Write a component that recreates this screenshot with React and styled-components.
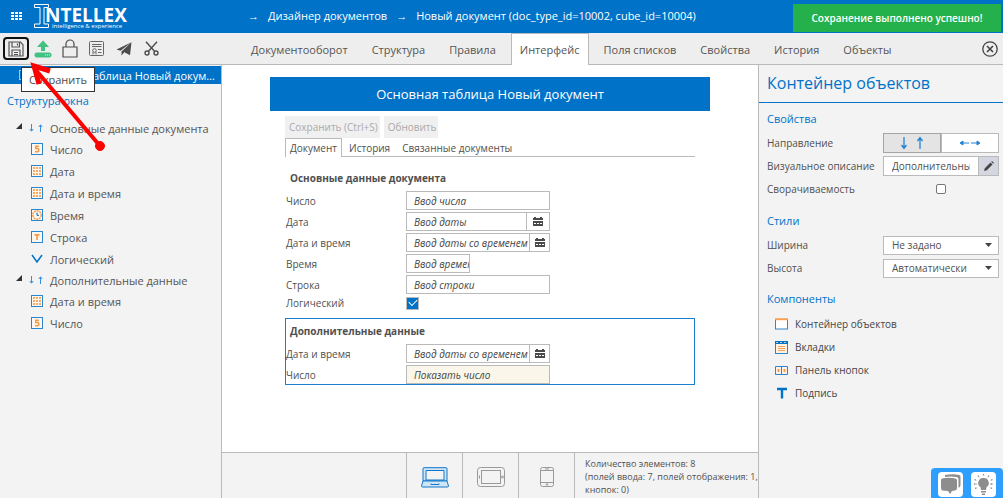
import React from "react";
import styled, { createGlobalStyle } from "styled-components";

const blue = "#0072c8";
const line = "#bababa";

const GlobalStyle = createGlobalStyle`
  * { box-sizing: border-box; }
  body {
    margin: 0;
    font-family: "Open Sans", "Noto Sans", sans-serif;
    font-size: 10px;
    color: #505050;
    background: #fff;
  }
  button, input, select { font: inherit; color: inherit; margin: 0; }
  h1, h2, h3, ul, p { margin: 0; padding: 0; font-weight: 400; }
  ul { list-style: none; }
  svg { display: block; flex: none; }
`;

const Page = styled.div`
  position: relative;
  min-height: 100vh;
  display: flex;
  flex-direction: column;
`;

/* ---------- header ---------- */
const Header = styled.header`
  display: flex;
  height: 33px;
  background: ${blue};
  color: #fff;
`;
const Brand = styled.div`
  display: flex;
  width: 248px;
  padding: 4px 0 0 11px;
`;
const PlainButton = styled.button`
  display: flex;
  align-items: center;
  justify-content: center;
  padding: 0;
  border: 0;
  background: none;
  cursor: pointer;
`;
const AppsButton = styled(PlainButton)`
  width: 11px;
  height: 24px;
`;
const Logo = styled.a`
  display: flex;
  margin-left: 12px;
  color: #fff;
  text-decoration: none;
`;
const LogoText = styled.span`
  display: flex;
  flex-direction: column;
  margin-left: -4px;
`;
const LogoName = styled.span`
  font-size: 19px;
  font-weight: 700;
  line-height: 16px;
  padding-top: 3px;
`;
const LogoTag = styled.span`
  font-size: 6px;
  line-height: 6px;
  padding-left: 7px;
  white-space: nowrap;
`;
const Breadcrumbs = styled.nav`
  display: flex;
  align-items: center;
  gap: 9px;
  font-size: 11px;
  height: 30px;
  white-space: nowrap;
  a { color: #fff; text-decoration: none; }
`;
const Toast = styled.div`
  position: absolute;
  top: 4px;
  right: 2px;
  width: 208px;
  height: 28px;
  line-height: 29px;
  text-align: center;
  background: #24b14c;
  color: #fff;
  font-size: 10px;
  font-weight: 600;
`;

/* ---------- toolbar and tabs ---------- */
const Bar = styled.div`
  display: flex;
  height: 32px;
  background: #eee;
  border-bottom: 1px solid ${line};
`;
const Tools = styled.div`
  position: relative;
  display: flex;
  align-items: center;
  width: 242px;
  padding-left: 3px;
  gap: 1px;
  height: 31px;
  color: #4c4c4c;
`;
const Tool = styled(PlainButton)`
  width: 26px;
  height: 23px;
  border: 2px solid ${(p) => (p.$focused ? "#111" : "transparent")};
  border-radius: 4px;
`;
const Tooltip = styled.div`
  position: absolute;
  z-index: 2;
  left: 21px;
  top: 34px;
  width: 74px;
  height: 25px;
  line-height: 24px;
  text-align: center;
  font-size: 11px;
  border: 1px solid #333;
  background: #fff;
`;
const Pointer = styled.svg`
  position: absolute;
  z-index: 3;
  left: 27px;
  top: 60px;
  pointer-events: none;
`;
const Tabs = styled.nav`
  display: flex;
  flex: 1;
  gap: 6px;
  height: 32px;
`;
const Tab = styled.a`
  padding: 0 8px;
  line-height: 32px;
  font-size: 11px;
  color: #555;
  text-decoration: none;
  white-space: nowrap;
  border: 1px solid ${(p) => (p.$active ? line : "transparent")};
  border-bottom: 0;
  background: ${(p) => (p.$active ? "#fff" : "transparent")};
`;
const CloseButton = styled(PlainButton)`
  width: 26px;
  height: 31px;
`;

/* ---------- body ---------- */
const Body = styled.div`
  flex: 1;
  display: grid;
  grid-template-columns: 222px minmax(0, 1fr) 245px;
`;
const Side = styled.aside`
  background: #f3f3f3;
  border-right: 1px solid ${line};
`;
const RootRow = styled.div`
  display: flex;
  align-items: center;
  gap: 1px;
  height: 18px;
  margin-top: 1px;
  padding: 0 1px 0 19px;
  background: ${blue};
  color: #fff;
  font-size: 11px;
  span { overflow: hidden; text-overflow: ellipsis; white-space: nowrap; }
`;
const TreeTitle = styled.h2`
  padding: 8px 7px 0;
  font-size: 11px;
  line-height: 17px;
  color: ${blue};
`;
const Tree = styled.ul`
  padding-top: 9px;
`;
const TreeRow = styled.li`
  display: flex;
  align-items: center;
  height: ${(p) => (p.$group ? 20 : 22)}px;
  padding-left: ${(p) => (p.$group ? 16 : 31)}px;
  gap: 7px;
  font-size: 11px;
  white-space: nowrap;
  color: #555;
`;

const Center = styled.main`
  display: flex;
  flex-direction: column;
`;
const Canvas = styled.div`
  flex: 1;
  padding: 12px 48px 24px;
`;
const FormTitle = styled.h1`
  height: 34px;
  line-height: 34px;
  background: ${blue};
  color: #fff;
  text-align: center;
  font-size: 13px;
`;
const FormBody = styled.div`
  padding: 5px 15px 0 15px;
`;
const Actions = styled.div`
  display: flex;
  gap: 4px;
`;
const Action = styled.button`
  height: 22px;
  padding: 0 2px 0 4px;
  border: 0;
  background: #f0f0f0;
  font-size: 10px;
  color: #aaa;
`;
const FormTabs = styled.div`
  display: flex;
  height: 19px;
  border-bottom: 1px solid ${line};
`;
const FormTab = styled.button`
  height: 19px;
  padding: 0 4px;
  margin-right: 2px;
  font-size: 10px;
  line-height: 17px;
  border: 1px solid ${(p) => (p.$active ? line : "transparent")};
  border-bottom: 0;
  background: ${(p) => (p.$active ? "#fff" : "none")};
`;
const Section = styled.section`
  margin-top: ${(p) => (p.$selected ? 7 : 8)}px;
  border: 1px solid ${(p) => (p.$selected ? "#1b80cc" : "transparent")};
`;
const SectionTitle = styled.h3`
  padding: 0 4px;
  height: 25px;
  line-height: 24px;
  font-size: 10px;
  font-weight: 700;
`;
const Field = styled.div`
  display: flex;
  align-items: center;
  height: ${(p) => (p.$short ? 14 : 19)}px;
  & + & { margin-top: 2px; }
  label { width: 120px; font-size: 10px; }
`;
const InputBox = styled.div`
  display: flex;
  width: ${(p) => (p.$narrow ? 64 : 144)}px;
  height: 19px;
  border: 1px solid ${line};
  background: ${(p) => (p.$readOnly ? "#faf6e9" : "#fff")};
  input {
    flex: 1;
    min-width: 0;
    padding: 0 0 0 7px;
    border: 0;
    background: none;
    outline: 0;
    font-size: 10px;
    font-style: italic;
  }
  input::placeholder { color: #444; opacity: 1; }
`;
const PickButton = styled(PlainButton)`
  width: ${(p) => (p.$wide ? 23 : 20)}px;
  border-left: 1px solid ${line};
`;
const Check = styled.input`
  appearance: none;
  width: 13px;
  height: 13px;
  border: 1px solid ${line};
  background: ${blue};
  display: grid;
  place-items: center;
  &:checked::after {
    content: "";
    width: 7px;
    height: 4px;
    margin-bottom: 3px;
    border: solid #fff;
    border-width: 0 0 1px 1px;
    transform: rotate(-45deg);
  }
`;

const Footer = styled.footer`
  display: flex;
  height: 46px;
  border-top: 1px solid ${line};
  background: #f3f3f3;
`;
const FooterSpace = styled.div`
  flex: 1;
`;
const Device = styled(PlainButton)`
  width: 56px;
  border-left: 1px solid ${line};
  padding-top: 3px;
`;
const Stats = styled.div`
  width: 184px;
  padding: 4px 0 0 10px;
  border-left: 1px solid ${line};
  font-size: 9px;
  line-height: 13px;
  white-space: nowrap;
`;

const Props = styled.aside`
  background: #f3f3f3;
  border-left: 1px solid ${line};
`;
const PropsTitle = styled.h2`
  height: 38px;
  padding-left: 8px;
  line-height: 36px;
  font-size: 16px;
  color: ${blue};
  border-bottom: 1px solid ${blue};
`;
const Group = styled.section`
  padding: ${(p) => p.$top}px 4px 0 8px;
`;
const GroupTitle = styled.h3`
  font-size: 11px;
  line-height: 18px;
  color: ${blue};
  margin-bottom: 5px;
`;
const PropRow = styled.div`
  display: grid;
  grid-template-columns: 116px minmax(0, 1fr);
  align-items: center;
  height: 20px;
  & + & { margin-top: 3px; }
  > label, > span { font-size: 10px; white-space: nowrap; }
`;
const Segments = styled.div`
  display: flex;
  height: 20px;
`;
const Segment = styled(PlainButton)`
  flex: 1;
  border: 1px solid ${(p) => (p.$active ? "#a5a5a5" : line)};
  background: ${(p) => (p.$active ? "#e4e4e4" : "#fff")};
`;
const EditBox = styled.div`
  display: flex;
  height: 20px;
  border: 1px solid ${line};
  background: #fff;
  input {
    flex: 1;
    min-width: 0;
    margin-right: 8px;
    padding: 0 0 0 8px;
    border: 0;
    outline: 0;
    background: none;
    font-size: 10px;
  }
`;
const EditButton = styled(PlainButton)`
  width: 20px;
  border-left: 1px solid ${line};
  background: #d5d7e0;
`;
const CenterCheck = styled.input`
  justify-self: center;
  appearance: none;
  width: 10px;
  height: 10px;
  border: 1px solid #767676;
  border-radius: 2px;
  background: #fff;
`;
const SelectBox = styled.div`
  display: grid;
  align-items: center;
  select, svg { grid-area: 1 / 1; }
  svg { justify-self: end; margin-right: 7px; pointer-events: none; }
  select {
    appearance: none;
    height: 19px;
    padding: 0 8px;
    border: 1px solid ${line};
    border-radius: 0;
    background: #fff;
    font-size: 10px;
  }
`;
const ComponentList = styled.ul`
  display: flex;
  flex-direction: column;
  gap: 1px;
`;
const Component = styled.li`
  display: flex;
  align-items: center;
  gap: 6px;
  height: 22px;
  padding-left: 8px;
  font-size: 10px;
  color: #444;
`;

const Helper = styled.div`
  position: fixed;
  right: 0;
  bottom: 0;
  display: flex;
  gap: 8px;
  padding: 4px 7px 1px;
  border-radius: 4px 4px 0 0;
  background: #2f9fff;
`;
const HelperButton = styled(PlainButton)`
  width: 25px;
  height: 25px;
  border-radius: 4px;
  background: #fff;
`;
const IconSlot = styled.span`
  display: flex;
  justify-content: center;
  width: 12px;
`;

/* ---------- icons ---------- */
const TypeIcon = ({ kind }) => {
  if (kind === "bool")
    return (
      <svg width="12" height="12" viewBox="0 0 12 12" fill="none" stroke={blue} strokeWidth="1.5">
        <path d="M1 2l5 7 5-7" />
      </svg>
    );
  return (
    <svg width="12" height="12" viewBox="0 0 12 12">
      <rect x=".5" y=".5" width="11" height="11" fill="#fdf6ee" stroke="#2a86cf" />
      {kind === "number" && (
        <path d="M8 3.2H4.8v2.4h1.6c2 0 2 3.1 0 3.1H4" fill="none" stroke="#f79a45" strokeWidth="1.5" />
      )}
      {kind === "text" && <path d="M3.5 3.8h5M6 3.8V9" stroke="#f79a45" strokeWidth="1.7" />}
      {kind === "date" &&
        [2, 5, 8].map((y) => [2, 5, 8].map((x) => <rect key={`${x}${y}`} x={x} y={y} width="2" height="2" fill="#f9ab66" />))}
      {kind === "time" && (
        <g fill="none">
          <circle cx="6" cy="6" r="4.2" stroke="#f79a45" strokeWidth="1.4" strokeDasharray="2 .7" />
          <path d="M6 3.5V6.3h2" stroke={blue} />
        </g>
      )}
    </svg>
  );
};

const VerticalArrows = () => (
  <svg width="14" height="10" viewBox="0 0 14 10" fill="none" stroke="#3b8fd8">
    <path d="M2.5 1v7M.8 6l1.7 2.2L4.2 6M11.5 9V2M9.8 4l1.7-2.2L13.2 4" />
  </svg>
);

const Calendar = () => (
  <svg width="10" height="10" viewBox="0 0 10 10" fill="#4a4a4a">
    <path d="M1 0h2v1h4V0h2v1h1v2H0V1h1zM0 4h10v2H0zM0 7h10v2H0z" />
    <path d="M0 6h1v1H0zM3 6h1v1H3zM6 6h1v1H6zM9 6h1v1H9z" />
  </svg>
);

const Caret = () => (
  <svg width="7" height="4" viewBox="0 0 7 4" fill="#444">
    <path d="M0 0h7L3.500 4z" />
  </svg>
);

const tools = [
  {
    label: "Сохранить",
    focused: true,
    icon: (
      <svg width="16" height="16" viewBox="0 0 16 16" fill="none" stroke="#555" strokeWidth="1.2">
        <path d="M1 1h11.500l2.500 2.800V15H1zM4 1v5h7.500V1M4 15V9h8v6M6 11.500h4M6 13.500h4M9.500 2.500v2" />
      </svg>
    ),
  },
  {
    label: "Опубликовать",
    icon: (
      <svg width="18" height="18" viewBox="0 0 18 18" fill="#41c182">
        <path d="M9 .5l6 6.500h-4V11H7V7H3z" />
        <path d="M2 12.500h14l1.500 1.500v2L16 17.500H2L.5 16v-2z" />
        <path d="M11 15h1M13 15h1M15 15h1" stroke="#eee" />
      </svg>
    ),
  },
  {
    label: "Заблокировать",
    icon: (
      <svg width="16" height="19" viewBox="0 0 16 19" fill="none" stroke="currentColor" strokeWidth="1.2">
        <path d="M1 8h14v10H1zM4 8V5a4 4 0 0 1 8 0v3" />
      </svg>
    ),
  },
  {
    label: "Сертификат",
    icon: (
      <svg width="16" height="16" viewBox="0 0 16 16" fill="none" stroke="#666">
        <rect x=".5" y=".5" width="14" height="14" rx="1" />
        <path d="M3 3.500h9.500M3 5.500h9.500M9 8.500h3.500M9 11.500h3.500M4 11v2.500M7 11v2.500" />
        <circle cx="5.500" cy="9.500" r="1.800" />
      </svg>
    ),
  },
  {
    label: "Отправить",
    icon: (
      <svg width="16" height="14" viewBox="0 0 16 14" fill="currentColor">
        <path d="M15.500.3L.5 7.500l4 1.300zM15.500.3L5.500 9.500v4l2.300-2.700zM15.500.3L7.500 9.800l6.500 3.400z" />
      </svg>
    ),
  },
  {
    label: "Вырезать",
    icon: (
      <svg width="15" height="15" viewBox="0 0 15 15" fill="none" stroke="currentColor" strokeWidth="1.400">
        <path d="M2 .8l8.500 9.500M13 .8L4.500 10.300" />
        <circle cx="3" cy="12" r="2" />
        <circle cx="12" cy="12" r="2" />
      </svg>
    ),
  },
];

const tabs = ["Документооборот", "Структура", "Правила", "Интерфейс", "Поля списков", "Свойства", "История", "Объекты"];

const tree = [
  { group: true, label: "Основные данные документа" },
  { kind: "number", label: "Число" },
  { kind: "date", label: "Дата" },
  { kind: "date", label: "Дата и время" },
  { kind: "time", label: "Время" },
  { kind: "text", label: "Строка" },
  { kind: "bool", label: "Логический" },
  { group: true, label: "Дополнительные данные" },
  { kind: "date", label: "Дата и время" },
  { kind: "number", label: "Число" },
];

const components = [
  {
    label: "Контейнер объектов",
    icon: (
      <svg width="14" height="12" viewBox="0 0 14 12">
        <rect x=".5" y="1.500" width="12" height="9.500" fill="#fff" stroke="#2a86cf" />
        <path d="M0 1.200h13" stroke="#f9a055" strokeWidth="2" />
      </svg>
    ),
  },
  {
    label: "Вкладки",
    icon: (
      <svg width="14" height="13" viewBox="0 0 14 13">
        <rect x=".5" y=".5" width="12" height="12" fill="#fff3e6" stroke="#2a86cf" />
        <path d="M0 1.500h13" stroke={blue} strokeWidth="3" />
        <path d="M1 1.500h2M5 1.500h2M9 1.500h2" stroke="#b9c9d8" />
        <path d="M3 5.500h7M3 7.500h7M3 9.500h7" stroke="#f9a055" />
      </svg>
    ),
  },
  {
    label: "Панель кнопок",
    icon: (
      <svg width="14" height="9" viewBox="0 0 14 9">
        <path d="M.5.5h12v8H.5zM6.500.5v8" fill="#fdf3ea" stroke="#2a86cf" />
        <path d="M2.500 3h2v3h-2zM8.500 3h2v3h-2z" fill="#f9a055" />
      </svg>
    ),
  },
  {
    label: "Подпись",
    icon: (
      <svg width="14" height="12" viewBox="0 0 14 12">
        <path d="M2 2h10M7 2v9.500" stroke={blue} strokeWidth="2.400" />
      </svg>
    ),
  },
];

const devices = [
  {
    label: "Компьютер",
    icon: (
      <svg width="28" height="21" viewBox="0 0 28 21" fill="#cfe6f7" stroke="#1377c9">
        <path d="M3 .7h22q1 0 1 1V14H2V1.700q0-1 1-1z" />
        <path d="M5 3.500h18V13H5z" fill="#f3f3f3" />
        <path d="M2 14h24l1.500 5q0 1-1 1h-25q-1 0-1-1z" />
        <path d="M10 16.500v1h8v-1" fill="none" />
      </svg>
    ),
  },
  {
    label: "Планшет",
    icon: (
      <svg width="28" height="21" viewBox="0 0 28 21" fill="none" stroke="#999">
        <rect x=".5" y=".5" width="27" height="19" rx="3" />
        <rect x="4.500" y="3.500" width="19" height="13" />
        <circle cx="25.500" cy="10" r="1" />
        <path d="M2.500 8.500v3" />
      </svg>
    ),
  },
  {
    label: "Телефон",
    icon: (
      <svg width="14" height="21" viewBox="0 0 14 21" fill="none" stroke="#999">
        <rect x=".5" y=".5" width="13" height="19" rx="2" />
        <path d="M1 3.500h12M1 15.500h12M5 2h4" />
        <circle cx="7" cy="17.500" r=".8" />
      </svg>
    ),
  },
];

const TextField = ({ id, label, hint, narrow, readOnly, picker }) => (
  <Field>
    <label htmlFor={id}>{label}</label>
    <InputBox $narrow={narrow} $readOnly={readOnly}>
      <input id={id} type="text" placeholder={hint} readOnly={readOnly} />
      {picker && (
        <PickButton type="button" aria-label="Выбрать дату" $wide={picker === "wide"}>
          <Calendar />
        </PickButton>
      )}
    </InputBox>
  </Field>
);

export default function App() {
  return (
    <Page>
      <GlobalStyle />
      <Header>
        <Brand>
          <AppsButton type="button" aria-label="Меню">
            <svg width="11" height="9" viewBox="0 0 11 9" fill="#fff">
              {[0, 3, 6].map((y) => [0, 4, 8].map((x) => <rect key={`${x}${y}`} x={x} y={y} width="3" height="2" />))}
            </svg>
          </AppsButton>
          <Logo href="#home">
            <svg width="15" height="25" viewBox="0 0 15 25" fill="none" stroke="#fff">
              <path d="M.5 .5h14v3H10V20h4.500v3.500H.5V20H6V3.500H.5z" />
            </svg>
            <LogoText>
              <LogoName>NTELLEX</LogoName>
              <LogoTag>intelligence &amp; experience</LogoTag>
            </LogoText>
          </Logo>
        </Brand>
        <Breadcrumbs aria-label="Путь">
          <span>→</span>
          <a href="#designer">Дизайнер документов</a>
          <span>→</span>
          <a href="#document">Новый документ (doc_type_id=10002, cube_id=10004)</a>
        </Breadcrumbs>
        <Toast role="status">Сохранение выполнено успешно!</Toast>
      </Header>

      <Bar>
        <Tools>
          {tools.map((t) => (
            <Tool key={t.label} type="button" aria-label={t.label} $focused={t.focused}>
              {t.icon}
            </Tool>
          ))}
          <Tooltip role="tooltip">Сохранить</Tooltip>
        </Tools>
        <Tabs>
          {tabs.map((t) => (
            <Tab key={t} href="#tab" $active={t === "Интерфейс"}>
              {t}
            </Tab>
          ))}
        </Tabs>
        <CloseButton type="button" aria-label="Закрыть">
          <svg width="16" height="16" viewBox="0 0 16 16" fill="none" stroke="#444" strokeWidth="1.300">
            <circle cx="8" cy="8" r="7.200" />
            <path d="M5 5l6 6M11 5l-6 6" strokeWidth="1.600" />
          </svg>
        </CloseButton>
      </Bar>

      <Body>
        <Side>
          <RootRow>
            <svg width="12" height="12" viewBox="0 0 12 12" fill="none" stroke="#9cc8ec">
              <rect x=".5" y="1.500" width="11" height="9" />
            </svg>
            <span>Основная таблица Новый документ</span>
          </RootRow>
          <TreeTitle>Структура окна</TreeTitle>
          <Tree>
            {tree.map((n, i) => (
              <TreeRow key={i} $group={n.group}>
                {n.group ? (
                  <>
                    <svg width="6" height="10" viewBox="0 0 6 10" fill="#333">
                      <path d="M6 0v6H0z" />
                    </svg>
                    <VerticalArrows />
                  </>
                ) : (
                  <IconSlot>
                    <TypeIcon kind={n.kind} />
                  </IconSlot>
                )}
                {n.label}
              </TreeRow>
            ))}
          </Tree>
        </Side>

        <Center>
          <Canvas>
            <FormTitle>Основная таблица Новый документ</FormTitle>
            <FormBody>
              <Actions>
                <Action type="button">Сохранить (Ctrl+S)</Action>
                <Action type="button">Обновить</Action>
              </Actions>
              <FormTabs>
                <FormTab type="button" $active>Документ</FormTab>
                <FormTab type="button">История</FormTab>
                <FormTab type="button">Связанные документы</FormTab>
              </FormTabs>
              <Section>
                <SectionTitle>Основные данные документа</SectionTitle>
                <TextField id="num" label="Число" hint="Ввод числа" />
                <TextField id="date" label="Дата" hint="Ввод даты" picker="wide" />
                <TextField id="datetime" label="Дата и время" hint="Ввод даты со временем" picker="slim" />
                <TextField id="time" label="Время" hint="Ввод времени" narrow />
                <TextField id="str" label="Строка" hint="Ввод строки" />
                <Field $short>
                  <label htmlFor="bool">Логический</label>
                  <Check id="bool" type="checkbox" defaultChecked />
                </Field>
              </Section>
              <Section $selected>
                <SectionTitle>Дополнительные данные</SectionTitle>
                <TextField id="datetime2" label="Дата и время" hint="Ввод даты со временем" picker="slim" />
                <TextField id="num2" label="Число" hint="Показать число" readOnly />
              </Section>
            </FormBody>
          </Canvas>
          <Footer>
            <FooterSpace />
            {devices.map((d) => (
              <Device key={d.label} type="button" aria-label={d.label}>
                {d.icon}
              </Device>
            ))}
            <Stats>
              Количество элементов: 8<br />
              (полей ввода: 7, полей отображения: 1,
              <br />
              кнопок: 0)
            </Stats>
          </Footer>
        </Center>

        <Props>
          <PropsTitle>Контейнер объектов</PropsTitle>
          <Group $top={7}>
            <GroupTitle>Свойства</GroupTitle>
            <PropRow>
              <span>Направление</span>
              <Segments>
                <Segment type="button" aria-label="Вертикально" $active>
                  <svg width="24" height="14" viewBox="0 0 24 14" fill="none" stroke="#2482d2" strokeWidth="1.300">
                    <path d="M4 1v11M1.500 9L4 12.500 6.500 9M20 13V2M17.500 5L20 1.500 22.500 5" />
                  </svg>
                </Segment>
                <Segment type="button" aria-label="Горизонтально">
                  <svg width="22" height="6" viewBox="0 0 22 6" fill="#2482d2" stroke="#2482d2">
                    <path d="M3 3h7M12 3h7" />
                    <path d="M4 1L1 3l3 2zM18 1l3 2-3 2z" />
                  </svg>
                </Segment>
              </Segments>
            </PropRow>
            <PropRow>
              <label htmlFor="desc">Визуальное описание</label>
              <EditBox>
                <input id="desc" type="text" defaultValue="Дополнительные данные" />
                <EditButton type="button" aria-label="Изменить">
                  <svg width="10" height="10" viewBox="0 0 10 10" fill="#444">
                    <path d="M0 10l.8-2.800L6.500 1.500l2 2L2.800 9.200zM7.200.8L8 0l2 2-.8.800z" />
                  </svg>
                </EditButton>
              </EditBox>
            </PropRow>
            <PropRow>
              <label htmlFor="fold">Сворачиваемость</label>
              <CenterCheck id="fold" type="checkbox" />
            </PropRow>
          </Group>
          <Group $top={13}>
            <GroupTitle>Стили</GroupTitle>
            <PropRow>
              <label htmlFor="w">Ширина</label>
              <SelectBox>
                <select id="w">
                  <option>Не задано</option>
                </select>
                <Caret />
              </SelectBox>
            </PropRow>
            <PropRow>
              <label htmlFor="h">Высота</label>
              <SelectBox>
                <select id="h">
                  <option>Автоматически</option>
                </select>
                <Caret />
              </SelectBox>
            </PropRow>
          </Group>
          <Group $top={12}>
            <GroupTitle>Компоненты</GroupTitle>
            <ComponentList>
              {components.map((c) => (
                <Component key={c.label}>
                  {c.icon}
                  {c.label}
                </Component>
              ))}
            </ComponentList>
          </Group>
        </Props>
      </Body>

      <Pointer width="82" height="94" viewBox="0 0 82 94" fill="none" stroke="#f00">
        <path d="M8 9L73 86" strokeWidth="4" />
        <path d="M23 11L7 6l5 18" strokeWidth="5" />
        <circle cx="73" cy="86" r="4.500" fill="#f00" />
      </Pointer>

      <Helper>
        <HelperButton type="button" aria-label="Чат">
          <svg width="21" height="21" viewBox="0 0 21 21" fill="#8d8d8d">
            <path d="M5 1q8-1.500 14 0 1.500 0 1.500 2v8q0 2-2 3V5q0-1.500-2-2Q10 2 5 3z" />
            <path d="M2 4.500q7-1.500 13.500 0Q17 5 17 6v8q0 2-2 2.500l-3 .5-2 3-2-3-5.500-.500Q1 16 1 14V6q0-1 1-1.500z" />
          </svg>
        </HelperButton>
        <HelperButton type="button" aria-label="Подсказка">
          <svg width="21" height="23" viewBox="0 0 21 23" fill="#8d8d8d">
            <path d="M10.500 5a5 5 0 0 1 3 9.200L13 17H8l-.5-2.800A5 5 0 0 1 10.500 5zM8 18h5v1.500H8zM9 20.500h3V22H9z" />
            <path
              d="M10.500 1v2M5 2.500l1.200 1.800M16 2.500l-1.200 1.800M1.500 6.500l2 1M19.500 6.500l-2 1M1 11h2.500M17.500 11H20M2 15.500l2-1M19 15.500l-2-1"
              stroke="#8d8d8d"
              strokeWidth="1.300"
              strokeDasharray="1.500 .5"
            />
          </svg>
        </HelperButton>
      </Helper>
    </Page>
  );
}
